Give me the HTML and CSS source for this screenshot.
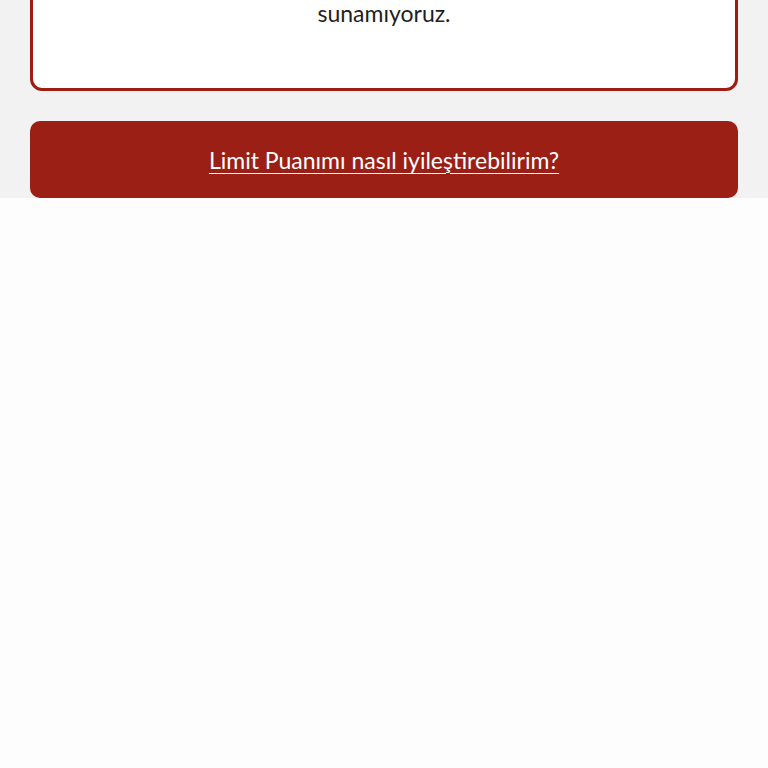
FILE: index.html
```html
<!DOCTYPE html>
<html lang="tr">
<head>
  <meta charset="UTF-8" />
  <meta name="viewport" content="width=device-width, initial-scale=1.0"/>
  <title>Limit Puanı</title>
  <link rel="stylesheet" href="styles.css">
</head>
<body>

  <div class="score-section">
    <div class="info-card">
      <p class="info-text">sunamıyoruz.</p>
    </div>

    <a href="#" class="help-button">Limit Puanımı nasıl iyileştirebilirim?</a>
  </div>

</body>
</html>
```

FILE: styles.css
```css
body {
  margin: 0;
  background: #fdfdfd;
  font-family: Lato, "Open Sans", sans-serif;
}

.score-section {
  background: #f2f2f2;
  padding: 0 30px;
  margin-top: -40px;
}

.info-card {
  background: #fff;
  border: 3px solid #9e1d13;
  border-radius: 12px;
  padding: 37px 20px 62px;
  text-align: center;
}

.info-text {
  margin: 0;
  font-size: 23px;
  line-height: 26px;
  color: #1f1f1f;
}

.help-button {
  display: flex;
  align-items: center;
  justify-content: center;
  margin-top: 30px;
  height: 77px;
  background-color: #9c1f15;
  border-radius: 10px;
  color: #fff;
  font-size: 23px;
  text-decoration: underline;
  text-underline-offset: 4px;
  text-decoration-thickness: 1px;
}
```
